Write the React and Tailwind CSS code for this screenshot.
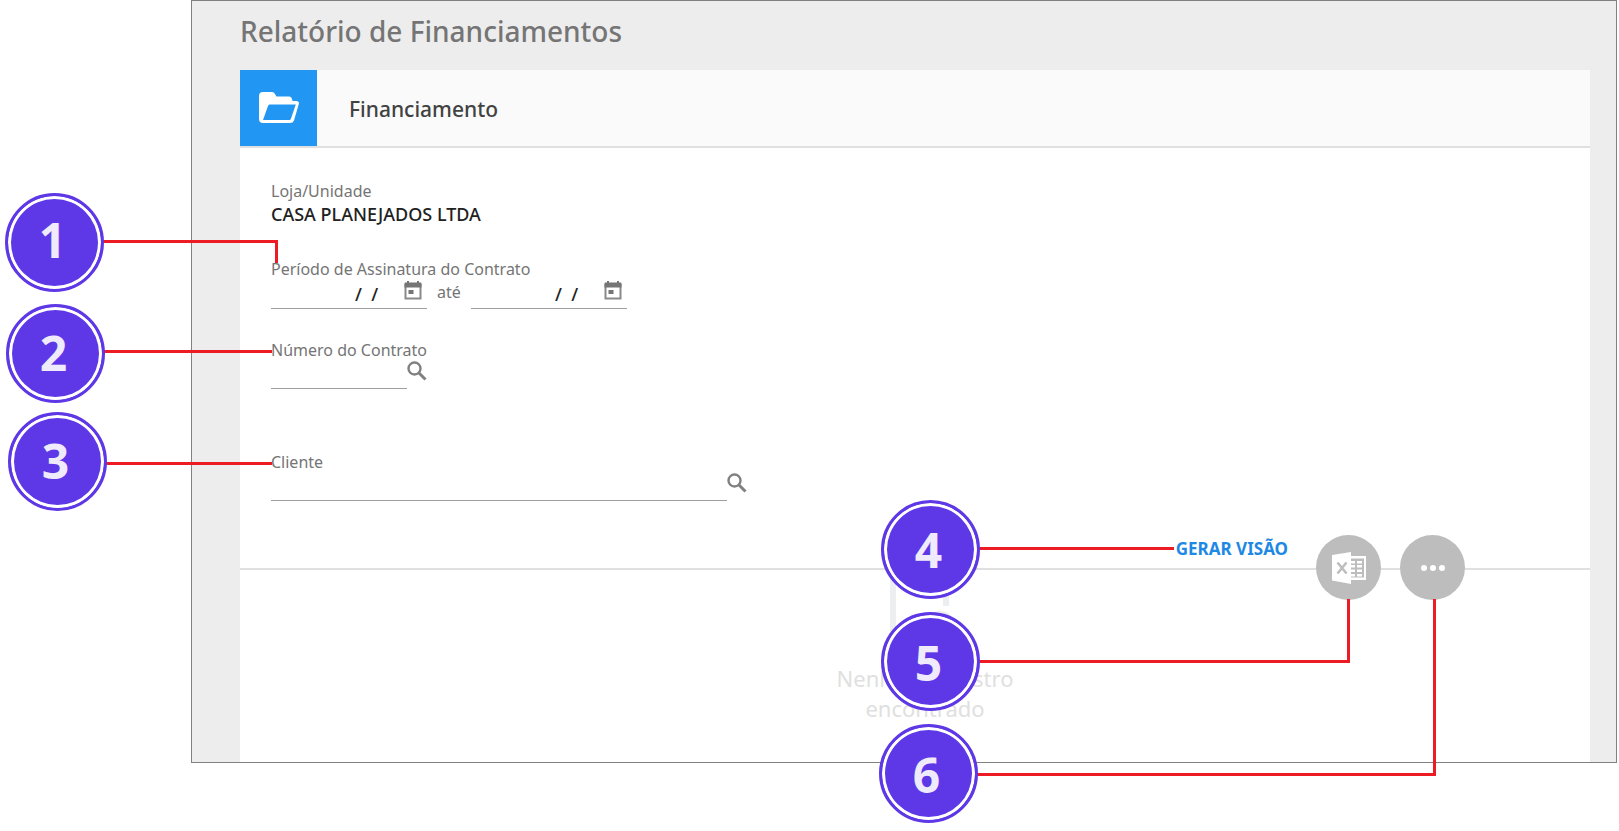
const CALLOUTS_LEFT = [
  { number: 1, badge: 'left-[5px] top-[193px] pb-[6px]', lines: ['left-[100px] top-[240px] w-[178px] h-[3px]', 'left-[275px] top-[240px] w-[3px] h-[23px]'] },
  { number: 2, badge: 'left-[6px] top-[304px] pb-[2px]', lines: ['left-[102px] top-[350px] w-[170px] h-[3px]'] },
  { number: 3, badge: 'left-[8px] top-[412px] pb-[2px]', lines: ['left-[104px] top-[462px] w-[168px] h-[3px]'] },
]

// These follow the action buttons, so they hang from the right edge
const CALLOUTS_RIGHT = [
  { number: 4, badge: 'right-[639px] top-[500px]', lines: ['right-[445px] top-[547px] w-[198px] h-[3px]'] },
  { number: 5, badge: 'right-[639px] top-[612px] pt-[2px]', lines: ['right-[269px] top-[660px] w-[373px] h-[3px]', 'right-[269px] top-[599px] w-[3px] h-[64px]'] },
  { number: 6, badge: 'right-[641px] top-[724px] pt-[2px]', lines: ['right-[183px] top-[773px] w-[460px] h-[3px]', 'right-[183px] top-[599px] w-[3px] h-[177px]'] },
]

function FolderIcon() {
  return (
    <svg className="w-10 h-8" viewBox="0 0 40 32" aria-hidden="true">
      <path
        fill="#fff"
        fillRule="evenodd"
        d="M0 4a4 4 0 0 1 4-4h9q2 0 3 2l1.500 2.500H30q3 0 3.500 4.500H37q3.500 0 2.800 3L35 28.500Q34 31 31 31H4a4 4 0 0 1-4-4ZM10.500 12.500Q9.500 12.500 9 14L4 28h26.500q1 0 1.500-1.500l4.800-14Z"
      />
    </svg>
  )
}

function CalendarIcon() {
  return (
    <svg className="w-[22px] h-[22px]" viewBox="0 0 22 22" aria-hidden="true">
      <path fill="none" stroke="#8a8a8a" strokeWidth="2" d="M3.500 4v14.500h15V4" />
      <path fill="#757575" d="M2.500 3.500q0-1 1-1H5V1h2v1.500h8V1h2v1.500h1.500q1 0 1 1v4h-17ZM6.500 10h5v4h-5Z" />
    </svg>
  )
}

function SearchIcon() {
  return (
    <svg className="w-[26px] h-[26px]" viewBox="0 0 26 26" fill="none" stroke="#808080" aria-hidden="true">
      <circle cx="10.500" cy="10.500" r="6" strokeWidth="2.400" />
      <path strokeWidth="3" d="m15 15 6.500 6.500" />
    </svg>
  )
}

function ExcelIcon() {
  return (
    <svg className="w-[34px] h-8" viewBox="0 0 34 32" aria-hidden="true">
      <path fill="#fff" d="M0 3 19 0v32L0 28.500ZM19 4h15v24H19Z" />
      <path fill="#bdbdbd" d="M19 6.500h13v19H19Z" />
      <path fill="#fff" d="M19 9h4v2.500h-4zM19 13h4v2.500h-4zM19 17.500h4V20h-4zM19 22h4v2.500h-4zM25 9h5v2.500h-5zM25 13h5v2.500h-5zM25 17.500h5V20h-5zM25 22h5v2.500h-5z" />
      <path stroke="#bdbdbd" strokeWidth="2.500" d="m5.500 10.500 9 11M14.500 10.500l-9 11" />
    </svg>
  )
}

function NoResultsIcon() {
  return (
    <svg className="w-[70px] h-[72px]" viewBox="0 0 70 72" fill="none" stroke="#eceff1" strokeWidth="6" aria-hidden="true">
      <path d="M56 32V3H3v65h32" />
      <circle cx="50" cy="52" r="12" />
      <path d="m58 61 9 9" />
    </svg>
  )
}

function DateField({ id, label }) {
  return (
    <div className="flex w-[156px] h-7 border-b border-[#9e9e9e] pr-[3px]">
      <input
        id={id}
        aria-label={label}
        defaultValue="/  /"
        className="w-0 flex-1 h-6 pl-[84px] pt-[2px] text-[18px] leading-6 font-medium text-[#212121] outline-none whitespace-pre"
      />
      <button type="button" aria-label="Abrir calendário" className="self-start -mt-px">
        <CalendarIcon />
      </button>
    </div>
  )
}

function SearchField({ id, label, width }) {
  return (
    <div>
      <label htmlFor={id} className="block text-[16px] leading-6 text-[#757575]">{label}</label>
      <div className="flex h-[27px]">
        <input id={id} className={`${width} border-b border-[#9e9e9e] text-[18px] text-[#212121] outline-none`} />
        <button type="button" aria-label={`Pesquisar ${label}`} className="self-start -ml-[3px] -mt-1">
          <SearchIcon />
        </button>
      </div>
    </div>
  )
}

function Callout({ number, badge, lines }) {
  return (
    <>
      {lines.map((line) => (
        <span key={line} className={`absolute bg-[#ed1c24] ${line}`} />
      ))}
      <span className={`absolute flex w-[99px] h-[99px] items-center justify-center rounded-full border-3 border-[#5e38e6] bg-[#5e38e6] inset-ring-3 inset-ring-white pr-1 text-5xl font-bold text-[#efeafc] ${badge}`}>
        {number}
      </span>
    </>
  )
}

export default function App() {
  return (
    <div className="relative min-h-screen bg-white font-['Noto_Sans','Open_Sans',sans-serif]">
      <main className="ml-[191px] mr-[2px] border border-[#808080] bg-[#ededed] pl-12 pr-[26px]">
        <h1 className="pt-[11px] pb-5 text-[28px] leading-[38px] font-medium text-[#757575]">
          Relatório de Financiamentos
        </h1>

        <section className="bg-white">
          <header className="flex items-center border-b-2 border-[#e0e0e0] bg-[#fafafa]">
            <div className="flex w-[77px] h-[76px] items-center justify-center bg-[#2196f3]">
              <FolderIcon />
            </div>
            <h2 className="ml-8 pt-[2px] text-[21px] leading-7 font-medium text-[#424242]">Financiamento</h2>
          </header>

          <form className="flex flex-col pl-[31px] pt-[31px]" onSubmit={(e) => e.preventDefault()}>
            <div className="text-[16px] leading-6 text-[#757575]">Loja/Unidade</div>
            <div className="text-[18px] leading-[22px] font-medium text-[#212121]">CASA PLANEJADOS LTDA</div>

            <fieldset className="mt-8">
              <legend className="text-[16px] leading-6 text-[#757575]">Período de Assinatura do Contrato</legend>
              <div className="flex">
                <DateField id="data-inicial" label="Data inicial" />
                <span className="w-11 pl-[10px] text-[16px] leading-[22px] text-[#757575]">até</span>
                <DateField id="data-final" label="Data final" />
              </div>
            </fieldset>

            <div className="mt-[29px]">
              <SearchField id="contrato" label="Número do Contrato" width="w-[136px]" />
            </div>
            <div className="mt-[61px]">
              <SearchField id="cliente" label="Cliente" width="w-[456px]" />
            </div>

            <div className="flex justify-end pt-9 pr-[302px] pb-[7px]">
              <button type="submit" className="text-[17px] leading-6 font-bold text-[#1e88e5]">
                GERAR VISÃO
              </button>
            </div>
          </form>

          <div className="relative flex flex-col items-center border-t-2 border-[#e0e0e0] h-[194px] pl-5 pt-1">
            <div className="absolute right-[125px] -top-[35px] flex gap-[19px]">
              <button type="button" aria-label="Exportar para Excel" className="flex w-[65px] h-[65px] items-center justify-center rounded-full bg-[#bdbdbd]">
                <ExcelIcon />
              </button>
              <button type="button" aria-label="Mais opções" className="flex w-[65px] h-[65px] items-center justify-center gap-[3px] rounded-full bg-[#bdbdbd]">
                <span className="w-1.5 h-1.5 rounded-full bg-white" />
                <span className="w-1.5 h-1.5 rounded-full bg-white" />
                <span className="w-1.5 h-1.5 rounded-full bg-white" />
              </button>
            </div>
            <NoResultsIcon />
            <p className="mt-[17px] w-[200px] text-center text-[22px] leading-[30px] text-[#e0e0e0]">
              Nenhum registro encontrado
            </p>
          </div>
        </section>
      </main>

      {[...CALLOUTS_LEFT, ...CALLOUTS_RIGHT].map((callout) => (
        <Callout key={callout.number} {...callout} />
      ))}
    </div>
  )
}
